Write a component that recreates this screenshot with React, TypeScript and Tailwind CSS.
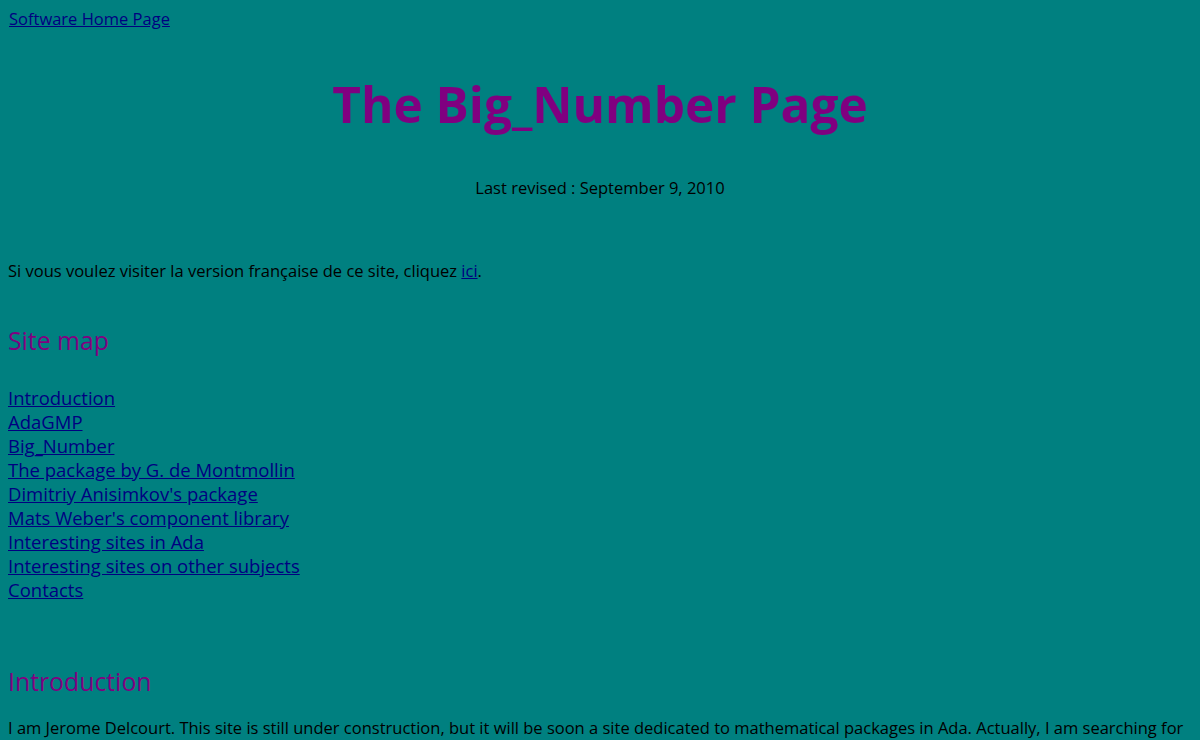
import React from 'react';

const siteMap = [
  'Introduction',
  'AdaGMP',
  'Big_Number',
  'The package by G. de Montmollin',
  "Dimitriy Anisimkov's package",
  "Mats Weber's component library",
  'Interesting sites in Ada',
  'Interesting sites on other subjects',
  'Contacts',
];

const App: React.FC = () => {
  return (
    <div className="min-h-screen bg-[#008080] px-2 pt-2 pb-10 text-black font-['Open_Sans',sans-serif] text-[16.5px]">
      <div className="pl-px leading-[22px]">
        <a href="#" className="text-[#000080] underline">Software Home Page</a>
      </div>

      <h1 className="mt-[42px] text-center text-[49.5px] font-bold leading-[64px] text-[#800080]">
        The Big_Number Page
      </h1>

      <p className="mt-[41px] text-center leading-[22px]">Last revised : September 9, 2010</p>

      <p className="mt-[61px] leading-[22px]">
        Si vous voulez visiter la version française de ce site, cliquez{' '}
        <a href="#" className="text-[#000080] underline">ici</a>.
      </p>

      <h2 className="mt-[42px] text-[24.8px] leading-[32px] text-[#800080]">Site map</h2>

      <ul className="mt-[30px] flex flex-col">
        {siteMap.map((item) => (
          <li key={item} className="text-[18.5px] leading-[24px]">
            <a href="#" className="text-[#000080] underline">{item}</a>
          </li>
        ))}
      </ul>

      <h2 className="mt-[63px] text-[24.8px] leading-[32px] text-[#800080]">Introduction</h2>

      <p className="mt-[20px] leading-[22px]">
        I am Jerome Delcourt. This site is still under construction, but it will be soon a site dedicated to mathematical packages in Ada. Actually, I am searching for packages dealing with big numbers, rational numbers and other mathematical objects, and I try to gather them here with some tests and comments.
      </p>
    </div>
  );
};

export default App;
